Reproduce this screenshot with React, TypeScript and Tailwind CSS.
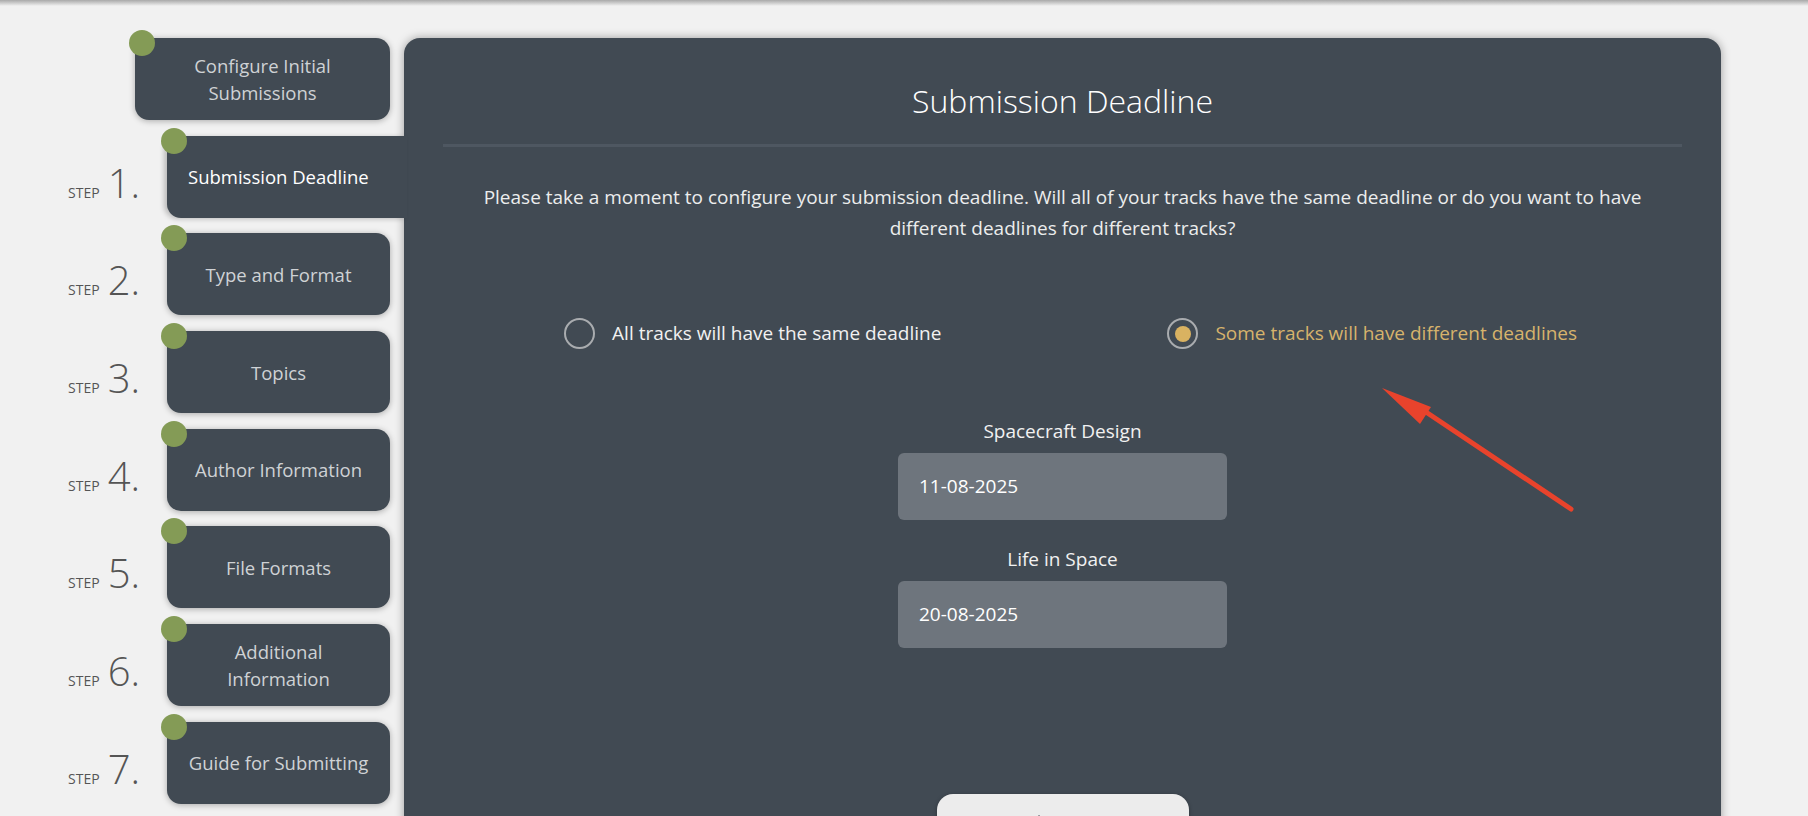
import { ArrowRight } from 'lucide-react';

const steps = [
    { n: 1, label: 'Submission Deadline', active: true },
    { n: 2, label: 'Type and Format' },
    { n: 3, label: 'Topics' },
    { n: 4, label: 'Author Information' },
    { n: 5, label: 'File Formats' },
    { n: 6, label: 'Additional Information', wrap: true },
    { n: 7, label: 'Guide for Submitting' },
];

const Dot = () => (
    <div className="absolute -left-[6px] -top-[8px] w-[26px] h-[26px] rounded-full bg-[#849b56]" />
);

const StepCard = ({ label, active, wrap }: { label: string; active?: boolean; wrap?: boolean }) => {
    if (active) {
        return (
            <div className="relative z-10 shrink-0 ml-[27px] w-[240px] h-[82px] rounded-l-[14px] bg-[#414a53] shadow-[-3px_1px_5px_rgba(0,0,0,0.22)] flex items-center pl-[21px] text-[18.5px] text-white">
                <Dot />
                {label}
            </div>
        );
    }
    return (
        <div className="relative shrink-0 ml-[27px] w-[223px] h-[82px] rounded-[14px] bg-[#414a53] shadow-[0_1px_6px_rgba(0,0,0,0.3)] flex items-center justify-center text-center text-[18.5px] leading-[27px] text-[#cfd2d5]">
            <Dot />
            <span className={wrap ? 'w-[130px]' : ''}>{label}</span>
        </div>
    );
};

const Radio = ({ checked, label }: { checked?: boolean; label: string }) => (
    <div className="flex items-center justify-center gap-[17px]">
        <div className="w-[31px] h-[31px] rounded-full border-[2.5px] border-[#a9acaf] flex items-center justify-center">
            {checked && <div className="w-[16px] h-[16px] rounded-full bg-[#d9b261]" />}
        </div>
        <span className={`text-[19px] ${checked ? 'text-[#d6b36c]' : 'text-[#f1f1f1]'}`}>{label}</span>
    </div>
);

const DateField = ({ label, value, first }: { label: string; value: string; first?: boolean }) => (
    <div className={`flex flex-col items-center ${first ? 'mt-[69px]' : 'mt-[26px]'}`}>
        <span className="text-[19px] leading-[26px] text-[#f1f1f1]">{label}</span>
        <div className="mt-[9px] w-[329px] h-[67px] rounded-[6px] bg-[#6e757d] flex items-center px-[21px] text-[19px] text-white">
            {value}
        </div>
    </div>
);

export default function App() {
    return (
        <div className="min-h-screen bg-[#f1f1f1] font-['Open_Sans',sans-serif]">
            {/* header shadow */}
            <div className="h-[6px] bg-gradient-to-b from-[#a9a9a9] to-[#f1f1f1]" />

            <div className="flex items-start">
                {/* Steps sidebar */}
                <div className="w-[404px] shrink-0 flex flex-col gap-[15.7px] pt-[32px]">
                    <div className="pl-[135px]">
                        <div className="relative w-[255px] h-[82px] rounded-[14px] bg-[#414a53] shadow-[0_1px_6px_rgba(0,0,0,0.3)] flex items-center justify-center text-center text-[18.5px] leading-[27px] text-[#cfd2d5]">
                            <Dot />
                            <span className="w-[160px]">Configure Initial Submissions</span>
                        </div>
                    </div>
                    {steps.map((s) => (
                        <div key={s.n} className="flex items-center">
                            <div className="w-[140px] shrink-0 flex justify-end items-baseline gap-[8px] pt-[12px] text-[#555]">
                                <span className="text-[14px]">STEP</span>
                                <span className="text-[40px] font-light leading-none">{s.n}.</span>
                            </div>
                            <StepCard label={s.label} active={s.active} wrap={s.wrap} />
                        </div>
                    ))}
                </div>

                {/* Main panel */}
                <div className="relative mt-[32px] w-[1317px] shrink-0 rounded-[16px] bg-[#414a53] shadow-[0_0_10px_rgba(0,0,0,0.35)] px-[39px] pt-[42px] pb-[40px]">
                    <h1 className="text-center text-[32px] leading-[42px] font-light text-white">Submission Deadline</h1>
                    <div className="mt-[22px] h-[3px] bg-[#4e5761]" />
                    <p className="mt-[35px] text-center text-[19px] leading-[31px] text-[#eceded]">
                        Please take a moment to configure your submission deadline. Will all of your tracks have the same deadline or do you want to have
                        <br />
                        different deadlines for different tracks?
                    </p>

                    <div className="mt-[74px] grid grid-cols-2">
                        <Radio label="All tracks will have the same deadline" />
                        <Radio checked label="Some tracks will have different deadlines" />
                    </div>

                    <DateField first label="Spacecraft Design" value="11-08-2025" />
                    <DateField label="Life in Space" value="20-08-2025" />

                    <div className="mt-[146px] flex justify-center">
                        <button className="w-[252px] h-[56px] rounded-[16px] bg-[#ececec] shadow-[0_1px_4px_rgba(0,0,0,0.3)] flex items-center justify-center gap-2 text-[18px] text-[#414a53]">
                            <ArrowRight size={20} />
                            Next
                        </button>
                    </div>

                    {/* annotation arrow */}
                    <svg className="absolute left-[970px] top-[300px] pointer-events-none" width="200" height="180" viewBox="0 0 200 180">
                        <line x1="197" y1="171" x2="40" y2="66" stroke="#e8432c" strokeWidth="5" strokeLinecap="round" />
                        <polygon points="8,50 57,69 46,86" fill="#e8432c" />
                    </svg>
                </div>
            </div>
        </div>
    );
}
